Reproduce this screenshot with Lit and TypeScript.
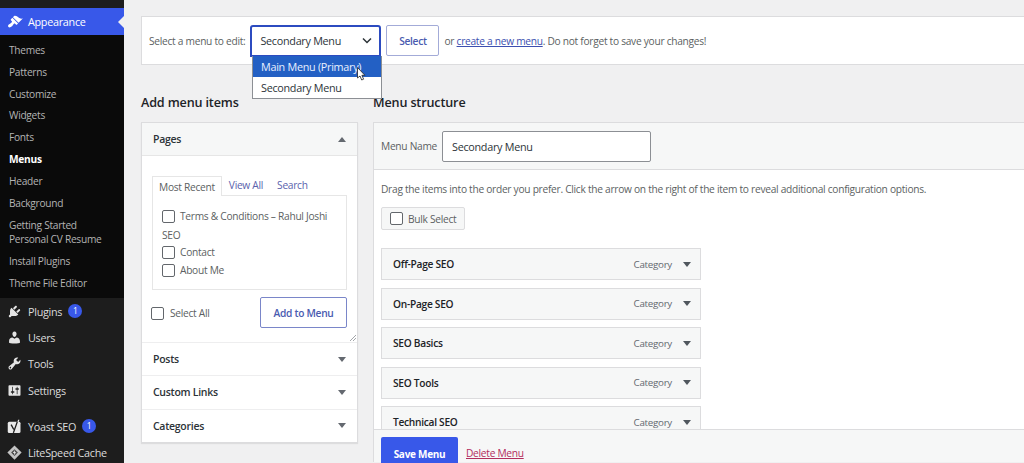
import { html, css, svg, LitElement } from 'lit';
import { customElement } from 'lit/decorators.js';

const icons = {
  appearance:
    'M14.48 11.06L7.41 3.99l1.5-1.5c.5-.56 2.3-.47 3.51.32 1.21.8 1.43 1.28 2.91 2.1 1.18.64 2.45 1.26 4.45.85zm-.71.71L6.7 4.7 4.93 6.47c-.39.39-.39 1.02 0 1.41l1.06 1.06c.39.39.39 1.03 0 1.42-.6.6-1.43 1.11-2.21 1.69-.35.26-.7.53-1.01.84C1.43 13.23.78 15.24 1.85 16.3c1.06 1.07 3 .39 4.33-.92.31-.31.59-.65.84-1 .58-.78 1.09-1.61 1.69-2.21.39-.39 1.03-.39 1.42 0l1.06 1.06c.39.39 1.02.39 1.41 0z',
  plugins:
    'M13.11 4.36L9.87 7.6 8 5.73l3.24-3.24c.35-.34 1.05-.2 1.56.32.52.51.66 1.21.31 1.55zm-8 1.77l.91-1.12 9.01 9.01-1.19.84c-.71.71-2.63 1.16-3.82 1.16H6.14L4.9 17.26c-.59.59-1.54.59-2.12 0-.59-.58-.59-1.53 0-2.12l1.24-1.24v-3.88c0-1.13.4-3.19 1.09-3.89zm7.26 3.97l3.24-3.24c.34-.35 1.04-.21 1.55.31.52.51.66 1.21.31 1.55l-3.24 3.25z',
  users:
    'M10 9.25c-2.27 0-2.73-3.44-2.73-3.44C7 4.02 7.82 2 9.97 2c2.16 0 2.98 2.02 2.71 3.81 0 0-.41 3.44-2.68 3.44zm0 2.57L12.72 10c2.39 0 4.52 2.33 4.52 4.53v2.49s-3.65 1.13-7.24 1.13c-3.65 0-7.24-1.13-7.24-1.13v-2.49c0-2.25 1.94-4.48 4.47-4.48z',
  tools:
    'M16.68 9.77c-1.34 1.34-3.3 1.67-4.95.99l-5.41 6.52c-.99.99-2.59.99-3.58 0s-.99-2.59 0-3.57l6.52-5.42c-.68-1.65-.35-3.61.99-4.95 1.28-1.28 3.12-1.62 4.72-1.06l-2.89 2.89 2.82 2.82 2.86-2.87c.53 1.58.18 3.39-1.08 4.65zM3.81 16.21c.4.39 1.04.39 1.43 0 .4-.4.4-1.04 0-1.43-.39-.4-1.03-.4-1.43 0-.39.39-.39 1.03 0 1.43z',
  settings:
    'M18 16V4c0-.55-.45-1-1-1H3c-.55 0-1 .45-1 1v12c0 .55.45 1 1 1h14c.55 0 1-.45 1-1zM8 11h1c.55 0 1 .45 1 1s-.45 1-1 1H8v1.5c0 .28-.22.5-.5.5s-.5-.22-.5-.5V13H6c-.55 0-1-.45-1-1s.45-1 1-1h1V5.5c0-.28.22-.5.5-.5s.5.22.5.5V11zm5-2h-1c-.55 0-1-.45-1-1s.45-1 1-1h1V5.5c0-.28.22-.5.5-.5s.5.22.5.5V7h1c.55 0 1 .45 1 1s-.45 1-1 1h-1v5.5c0 .28-.22.5-.5.5s-.5-.22-.5-.5V9z',
};

const icon = (name: keyof typeof icons) => svg`<svg class="ico" viewBox="0 0 20 20"><path fill-rule="evenodd" d=${icons[name]}></path></svg>`;

const yoast = svg`<svg class="ico" viewBox="0 0 20 20">
  <rect x="1" y="3.5" width="17" height="15" rx="2" fill="#e8e8e8"></rect>
  <path d="M5.5 7.5l3.5 6.5M14.5 1.5L8.5 18.5" fill="none" stroke="#1d1d1d" stroke-width="1.8"></path>
  <path d="M14.8 1l-1 3h1.700l1-3z" fill="#e8e8e8"></path>
</svg>`;

const litespeed = svg`<svg class="ico" viewBox="0 0 20 20">
  <path d="M10 .5l9.5 9.5L10 19.5.5 10z" fill="#c4c4c4"></path>
  <path d="M10 5.5L5.5 10l4.5 4.5 4.5-4.500z" fill="#4a4a4a"></path>
  <path d="M10.8 6.5L7.8 10.5h2l-.6 3 3-4h-2z" fill="#f2f2f2"></path>
</svg>`;

const caret = (up = false) =>
  html`<svg class="caret" viewBox="0 0 8 5"><path d=${up ? 'M4 0l4 5H0z' : 'M0 0h8L4 5z'}></path></svg>`;

@customElement('app-root')
export class AppRoot extends LitElement {
  static styles = css`
    :host {
      display: block;
      width: 1024px;
      height: 463px;
      overflow: hidden;
      background: #f0f0f1;
      font-family: 'Open Sans', 'Noto Sans', sans-serif;
      font-size: 10.2px;
      letter-spacing: -0.28px;
      color: #5c5f62;
    }
    * {
      box-sizing: border-box;
    }
    .layout {
      display: flex;
      height: 463px;
    }

    /* sidebar */
    .side {
      width: 124px;
      flex: none;
      background: #1d1d1d;
      padding-top: 8px;
      color: #dcdcdc;
    }
    .current {
      position: relative;
      display: flex;
      align-items: center;
      gap: 5px;
      height: 27px;
      padding-left: 7px;
      background: #3858e9;
      color: #fff;
      font-size: 10.8px;
    }
    .current::after {
      content: '';
      position: absolute;
      right: 0;
      top: 8px;
      border: 6px solid transparent;
      border-right-color: #f0f0f1;
      border-left-width: 0;
    }
    .sub {
      background: #0a0a0a;
      height: 263px;
      padding: 5px 9px 0;
      color: #b4b4b4;
    }
    .sub div {
      height: 21.8px;
      line-height: 21px;
      white-space: nowrap;
    }
    .sub .on {
      color: #fff;
      font-weight: 700;
    }
    .sub .two {
      height: 37px;
      line-height: 14px;
      padding-top: 4px;
    }
    .nav {
      display: flex;
      align-items: center;
      gap: 6px;
      height: 26.3px;
      padding-left: 7px;
      font-size: 10.8px;
    }
    .gap {
      margin-top: 10px;
    }
    .ico {
      width: 15px;
      height: 15px;
      fill: #e4e4e4;
      flex: none;
    }
    .current .ico {
      fill: #fff;
      width: 16px;
      height: 16px;
    }
    .count {
      width: 14px;
      height: 14px;
      border-radius: 50%;
      background: #3858e9;
      color: #fff;
      font-size: 8.5px;
      line-height: 14px;
      text-align: center;
    }

    /* main */
    .main {
      flex: 1;
      padding: 16px 0 0 17px;
      min-width: 0;
    }
    .manage {
      position: relative;
      display: flex;
      align-items: center;
      height: 49px;
      padding-left: 7px;
      background: #fff;
      border: 1px solid #dcdcde;
      border-right: 0;
      white-space: nowrap;
    }
    .select {
      display: flex;
      align-items: center;
      justify-content: space-between;
      width: 131px;
      height: 32px;
      margin: 0 5px;
      padding: 0 7px 0 8px;
      background: #fff;
      border: 2px solid #2c4bc0;
      border-radius: 3px 3px 0 0;
      color: #2c3338;
      font-size: 10.8px;
    }
    .chev {
      width: 10px;
      height: 7px;
      fill: none;
      stroke: #2c3338;
      stroke-width: 1.5;
    }
    .select-btn {
      display: flex;
      align-items: center;
      justify-content: center;
      width: 53px;
      height: 31px;
      margin-right: 5px;
      background: #fff;
      border: 1px solid #a3abd8;
      border-radius: 2px;
      color: #4a5bb0;
      font-weight: 600;
    }
    a {
      color: #3c4fb0;
    }
    .dropdown {
      position: absolute;
      left: 110px;
      top: 39px;
      width: 130px;
      background: #fff;
      border: 1px solid #8c8f94;
      border-top: 0;
      color: #2c3338;
      font-size: 10.8px;
      z-index: 2;
    }
    .dropdown div {
      height: 21px;
      line-height: 21px;
      padding-left: 8px;
    }
    .dropdown .hl {
      background: #2360c4;
      color: #e8f0ff;
    }
    .cursor {
      position: absolute;
      left: 104px;
      top: 11px;
      width: 9px;
      height: 14px;
    }
    .cols {
      display: flex;
      margin-top: 30px;
    }
    .left {
      width: 217px;
      margin-right: 15px;
      flex: none;
    }
    .right {
      flex: 1;
      min-width: 0;
    }
    h2 {
      margin: 0;
      height: 16px;
      line-height: 16px;
      font-size: 12.6px;
      letter-spacing: -0.15px;
      font-weight: 600;
      color: #1d2327;
    }

    /* accordion */
    .acc {
      margin-top: 11px;
      background: #fff;
      border: 1px solid #dcdcde;
      box-shadow: 0 1px 1px rgba(0, 0, 0, 0.08);
    }
    .acc-head {
      display: flex;
      align-items: center;
      justify-content: space-between;
      height: 33.3px;
      padding: 0 11px;
      border-top: 1px solid #eeeeef;
      font-weight: 600;
      font-size: 10.5px;
      color: #2c3338;
    }
    .acc-head.first {
      height: 33px;
      background: #f6f7f7;
      border-top: 0;
      border-bottom: 1px solid #e6e6e6;
    }
    .caret {
      width: 8px;
      height: 5px;
      fill: #646970;
    }
    .acc-body {
      position: relative;
      height: 186px;
      padding: 19px 10px 0;
    }
    .tabs {
      display: flex;
      align-items: flex-end;
      height: 20px;
    }
    .tab {
      height: 20px;
      line-height: 20px;
      padding: 0 6px;
      border: 1px solid #e6e6e6;
      border-bottom: 0;
      background: #fff;
      position: relative;
      top: 1px;
    }
    .tab-link {
      height: 20px;
      line-height: 20px;
      padding: 0 7px;
      color: #5a62ad;
    }
    .tab-box {
      height: 95px;
      padding-top: 11px;
      border: 1px solid #e6e6e6;
    }
    .check-row {
      display: flex;
      align-items: center;
      gap: 5px;
      height: 18px;
      padding-left: 9px;
      white-space: nowrap;
    }
    .box {
      width: 13px;
      height: 13px;
      flex: none;
      background: #fff;
      border: 1px solid #63676c;
      border-radius: 2px;
    }
    .plain {
      height: 18px;
      line-height: 20px;
      padding-left: 9px;
    }
    .add-row {
      display: flex;
      align-items: center;
      justify-content: space-between;
      margin-top: 7px;
    }
    .select-all {
      display: flex;
      align-items: center;
      gap: 6px;
      margin: 1px 0 0 -1px;
    }
    .add {
      width: 87px;
      height: 31px;
      display: flex;
      align-items: center;
      justify-content: center;
      border: 1px solid #7a86c9;
      border-radius: 2px;
      color: #4a5bb0;
      font-weight: 600;
    }
    .resize {
      position: absolute;
      right: 1px;
      bottom: 1px;
      width: 6px;
      height: 6px;
      fill: none;
      stroke: #8c8f94;
      stroke-width: 0.8;
    }

    /* menu structure */
    .panel {
      display: flex;
      flex-direction: column;
      height: 340px;
      margin-top: 11px;
      background: #fff;
      border: 1px solid #dcdcde;
      border-right: 0;
      border-bottom: 0;
    }
    .panel-head {
      display: flex;
      align-items: center;
      gap: 5px;
      height: 47px;
      flex: none;
      padding-left: 7px;
      background: #f6f7f7;
      border-bottom: 1px solid #dcdcde;
    }
    .name {
      width: 209px;
      height: 31px;
      line-height: 29px;
      padding-left: 9px;
      background: #fff;
      border: 1px solid #8c8f94;
      border-radius: 2px;
      color: #2c3338;
      font-size: 10.8px;
    }
    .panel-body {
      flex: 1;
      min-height: 0;
      overflow: hidden;
      padding: 12px 7px 0;
    }
    .hint {
      height: 14px;
      line-height: 14px;
      white-space: nowrap;
    }
    .bulk {
      display: flex;
      align-items: center;
      gap: 5px;
      width: 84px;
      height: 23px;
      margin: 11px 0 18px;
      padding-left: 8px;
      background: #f6f7f7;
      border: 1px solid #dcdcde;
      border-radius: 2px;
    }
    .item {
      display: flex;
      align-items: center;
      width: 320px;
      height: 32px;
      margin-bottom: 7.5px;
      padding: 0 9px 0 11px;
      background: #f6f7f7;
      border: 1px solid #dcdcde;
      color: #1d2327;
      font-weight: 600;
    }
    .item span {
      margin-left: auto;
      margin-right: 11px;
      font-weight: 400;
      color: #646970;
      font-size: 9.8px;
    }
    .item .caret {
      fill: #50575e;
    }
    .panel-foot {
      display: flex;
      align-items: flex-start;
      gap: 8px;
      height: 33px;
      flex: none;
      padding: 7px 0 0 7px;
      background: #f6f7f7;
      border-top: 1px solid #dcdcde;
    }
    .save {
      width: 77px;
      height: 33px;
      flex: none;
      display: flex;
      align-items: center;
      justify-content: center;
      background: #3858e9;
      border-radius: 2px 2px 0 0;
      color: #fff;
      font-size: 10px;
      font-weight: 700;
    }
    .delete {
      line-height: 33px;
      color: #b32d5e;
      text-decoration: underline;
    }
  `;

  render() {
    const sub = ['Themes', 'Patterns', 'Customize', 'Widgets', 'Fonts'];
    const sub2 = ['Header', 'Background'];
    const items = ['Off-Page SEO', 'On-Page SEO', 'SEO Basics', 'SEO Tools', 'Technical SEO'];
    return html`
      <div class="layout">
        <aside class="side">
          <div class="current">${icon('appearance')}Appearance</div>
          <div class="sub">
            ${sub.map((s) => html`<div>${s}</div>`)}
            <div class="on">Menus</div>
            ${sub2.map((s) => html`<div>${s}</div>`)}
            <div class="two">Getting Started<br />Personal CV Resume</div>
            <div>Install Plugins</div>
            <div>Theme File Editor</div>
          </div>
          <div class="nav">${icon('plugins')}Plugins<span class="count">1</span></div>
          <div class="nav">${icon('users')}Users</div>
          <div class="nav">${icon('tools')}Tools</div>
          <div class="nav">${icon('settings')}Settings</div>
          <div class="nav gap">${yoast}Yoast SEO<span class="count">1</span></div>
          <div class="nav">${litespeed}LiteSpeed Cache</div>
        </aside>
        <main class="main">
          <div class="manage">
            Select a menu to edit:
            <div class="select">
              Secondary Menu
              <svg class="chev" viewBox="0 0 10 7"><path d="M1 1.5l4 4 4-4"></path></svg>
            </div>
            <div class="select-btn">Select</div>
            <span>or <a href="#">create a new menu</a>. Do not forget to save your changes!</span>
            <div class="dropdown">
              <div class="hl">Main Menu (Primary)</div>
              <div>Secondary Menu</div>
              <svg class="cursor" viewBox="0 0 9 14">
                <path d="M.5.5v10.5l2.5-2 1.7 4 1.9-.8-1.7-3.9h3z" fill="#fff" stroke="#222" stroke-width=".8"></path>
              </svg>
            </div>
          </div>
          <div class="cols">
            <section class="left">
              <h2>Add menu items</h2>
              <div class="acc">
                <div class="acc-head first">Pages${caret(true)}</div>
                <div class="acc-body">
                  <div class="tabs">
                    <div class="tab">Most Recent</div>
                    <div class="tab-link">View All</div>
                    <div class="tab-link">Search</div>
                  </div>
                  <div class="tab-box">
                    <div class="check-row"><span class="box"></span>Terms &amp; Conditions – Rahul Joshi</div>
                    <div class="plain">SEO</div>
                    <div class="check-row"><span class="box"></span>Contact</div>
                    <div class="check-row"><span class="box"></span>About Me</div>
                  </div>
                  <div class="add-row">
                    <div class="select-all"><span class="box"></span>Select All</div>
                    <div class="add">Add to Menu</div>
                  </div>
                  <svg class="resize" viewBox="0 0 6 6"><path d="M0 6l6-6M3 6l3-3"></path></svg>
                </div>
                <div class="acc-head">Posts${caret()}</div>
                <div class="acc-head">Custom Links${caret()}</div>
                <div class="acc-head">Categories${caret()}</div>
              </div>
            </section>
            <section class="right">
              <h2>Menu structure</h2>
              <div class="panel">
                <div class="panel-head">Menu Name<div class="name">Secondary Menu</div></div>
                <div class="panel-body">
                  <div class="hint">Drag the items into the order you prefer. Click the arrow on the right of the item to reveal additional configuration options.</div>
                  <div class="bulk"><span class="box"></span>Bulk Select</div>
                  ${items.map((i) => html`<div class="item">${i}<span>Category</span>${caret()}</div>`)}
                </div>
                <div class="panel-foot">
                  <div class="save">Save Menu</div>
                  <a class="delete" href="#">Delete Menu</a>
                </div>
              </div>
            </section>
          </div>
        </main>
      </div>
    `;
  }
}
